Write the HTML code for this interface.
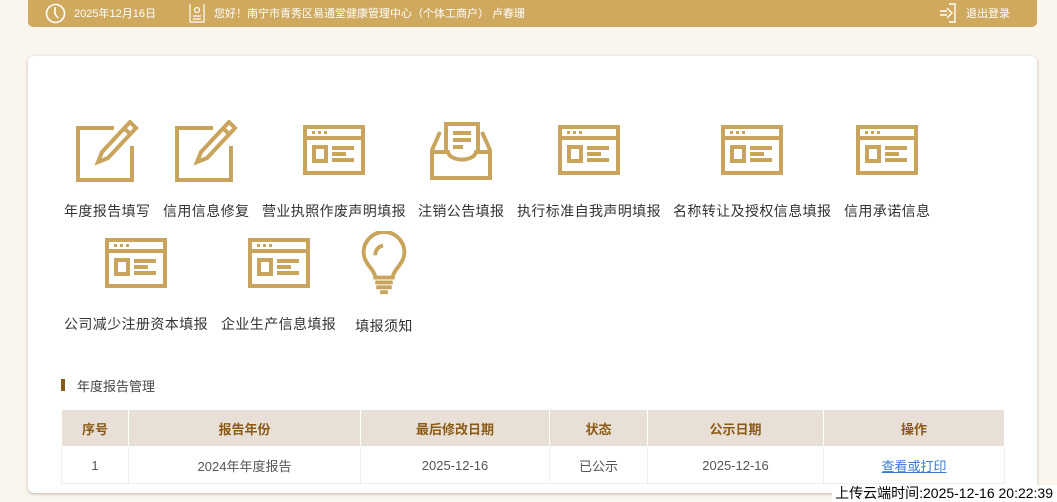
<!DOCTYPE html>
<html><head><meta charset="utf-8"><style>
*{margin:0;padding:0;box-sizing:border-box}
body{width:1057px;height:502px;background:#faf6ee;font-family:"Liberation Sans","Noto Sans CJK SC",sans-serif;position:relative;overflow:hidden}
.top{position:absolute;left:28px;top:0;width:1009px;height:27px;background:#cfa95e;border-radius:0 0 5px 5px;color:#fff;font-size:11px}
.top span{position:absolute;top:5px}
.card{position:absolute;left:28px;top:56px;width:1009px;height:437px;background:#fff;border-radius:6px;box-shadow:0 1px 3px rgba(0,0,0,.25)}
.ic{position:absolute;text-align:center;font-size:14px;letter-spacing:0.4px;color:#333;white-space:nowrap}
.ic svg{display:block;margin:0 auto}
.title{position:absolute;left:61px;top:376px;font-size:13px;color:#444}
.title:before{content:"";position:absolute;left:0;top:3px;width:4px;height:12px;background:#8a5a14}
table{position:absolute;left:61px;top:409px;width:944px;border-collapse:collapse;font-size:13px}
th{background:#e8e0d7;color:#8a5a14;height:37px;border:1px solid #fff;font-weight:bold}
td{height:37px;text-align:center;color:#555;border:1px solid #eee}
a{color:#3a7bd5;text-decoration:underline}
.foot{position:absolute;right:0;bottom:0;background:#fff;font-size:14px;color:#000;padding:0 4px 0 3px;line-height:17px}
</style></head><body>
<div class="top">
<svg style="position:absolute;left:17px;top:3px" width="21" height="21" viewBox="0 0 21 21" fill="none" stroke="#fff" stroke-width="1.6"><circle cx="10.5" cy="10.5" r="9"/><path d="M10 4v7l3 4"/></svg>
<span style="left:46px">2025年12月16日</span>
<svg style="position:absolute;left:161px;top:3px" width="16" height="20" viewBox="0 0 16 20" fill="none" stroke="#fff" stroke-width="1.2"><path d="M1 1v18h14V1"/><circle cx="8" cy="7" r="2.5"/><path d="M4 13h8M4 16h8"/></svg>
<span style="left:186px">您好！南宁市青秀区易通堂健康管理中心（个体工商户） 卢春珊</span>
<svg style="position:absolute;left:911px;top:3px" width="20" height="20" viewBox="0 0 20 20" fill="none" stroke="#fff" stroke-width="1.4"><path d="M10 1h6v18h-6M1 8h7M1 12h7M8 5l5 5-5 5"/></svg>
<span style="left:938px">退出登录</span>
</div>
<div class="card"></div>

<svg width="0" height="0" style="position:absolute"><defs>
<g id="form" fill="none" stroke="#c9a45c" stroke-width="4"><rect x="3" y="3" width="58" height="46"/><path d="M3 14h58"/><path d="M10 8.5h3M16 8.5h3M22 8.5h3" stroke-width="3"/><rect x="12" y="23" width="12" height="14"/><path d="M30 24h22M30 30h14M30 36h22"/></g>
<g id="pen" fill="none" stroke="#c9a45c" stroke-width="4"><path d="M40 8H4v52h54V26"/><path d="M56 2l6 6-28 30-10 4 4-10z"/><path d="M50 8l6 6"/></g>
</defs></svg>

<div class="ic" style="left:64px;top:120px"><svg width="66" height="62" viewBox="0 0 66 62"><use href="#pen"/></svg><div style="margin-top:19px">年度报告填写</div></div>
<div class="ic" style="left:163px;top:120px"><svg width="66" height="62" viewBox="0 0 66 62"><use href="#pen"/></svg><div style="margin-top:19px">信用信息修复</div></div>
<div class="ic" style="left:262px;top:124px"><svg width="64" height="52" viewBox="0 0 64 52"><use href="#form"/></svg><div style="margin-top:25px">营业执照作废声明填报</div></div>
<div class="ic" style="left:418px;top:120px"><svg width="66" height="62" viewBox="0 0 66 62" fill="none" stroke="#c9a45c" stroke-width="4"><path d="M18 34V4h32v30"/><path d="M25 13h18M25 20h18M25 27h10"/><path d="M12 12L4 30v28h58V30l-8-18"/><path d="M4 32h16c2 10 26 10 28 0h14"/></svg><div style="margin-top:19px">注销公告填报</div></div>
<div class="ic" style="left:517px;top:124px"><svg width="64" height="52" viewBox="0 0 64 52"><use href="#form"/></svg><div style="margin-top:25px">执行标准自我声明填报</div></div>
<div class="ic" style="left:673px;top:124px"><svg width="64" height="52" viewBox="0 0 64 52"><use href="#form"/></svg><div style="margin-top:25px">名称转让及授权信息填报</div></div>
<div class="ic" style="left:844px;top:124px"><svg width="64" height="52" viewBox="0 0 64 52"><use href="#form"/></svg><div style="margin-top:25px">信用承诺信息</div></div>

<div class="ic" style="left:64px;top:237px"><svg width="64" height="52" viewBox="0 0 64 52"><use href="#form"/></svg><div style="margin-top:25px">公司减少注册资本填报</div></div>
<div class="ic" style="left:221px;top:237px"><svg width="64" height="52" viewBox="0 0 64 52"><use href="#form"/></svg><div style="margin-top:25px">企业生产信息填报</div></div>
<div class="ic" style="left:355px;top:231px"><svg width="58" height="66" viewBox="0 0 58 68" fill="none" stroke="#c9a45c" stroke-width="4"><path d="M20 48c0-8-12-14-12-26a21 21 0 0 1 42 0c0 12-12 18-12 26z"/><path d="M20 25c0-5 3-9 8-10"/><path d="M20 53h18M21 58h16M25 63h8"/></svg><div style="margin-top:19px">填报须知</div></div>

<div class="title"><span style="margin-left:16px">年度报告管理</span></div>
<table>
<tr><th style="width:67px">序号</th><th style="width:232px">报告年份</th><th style="width:189px">最后修改日期</th><th style="width:98px">状态</th><th style="width:176px">公示日期</th><th>操作</th></tr>
<tr><td>1</td><td>2024年年度报告</td><td>2025-12-16</td><td>已公示</td><td>2025-12-16</td><td><a>查看或打印</a></td></tr>
</table>
<div class="foot">上传云端时间:2025-12-16 20:22:39</div>
</body></html>
